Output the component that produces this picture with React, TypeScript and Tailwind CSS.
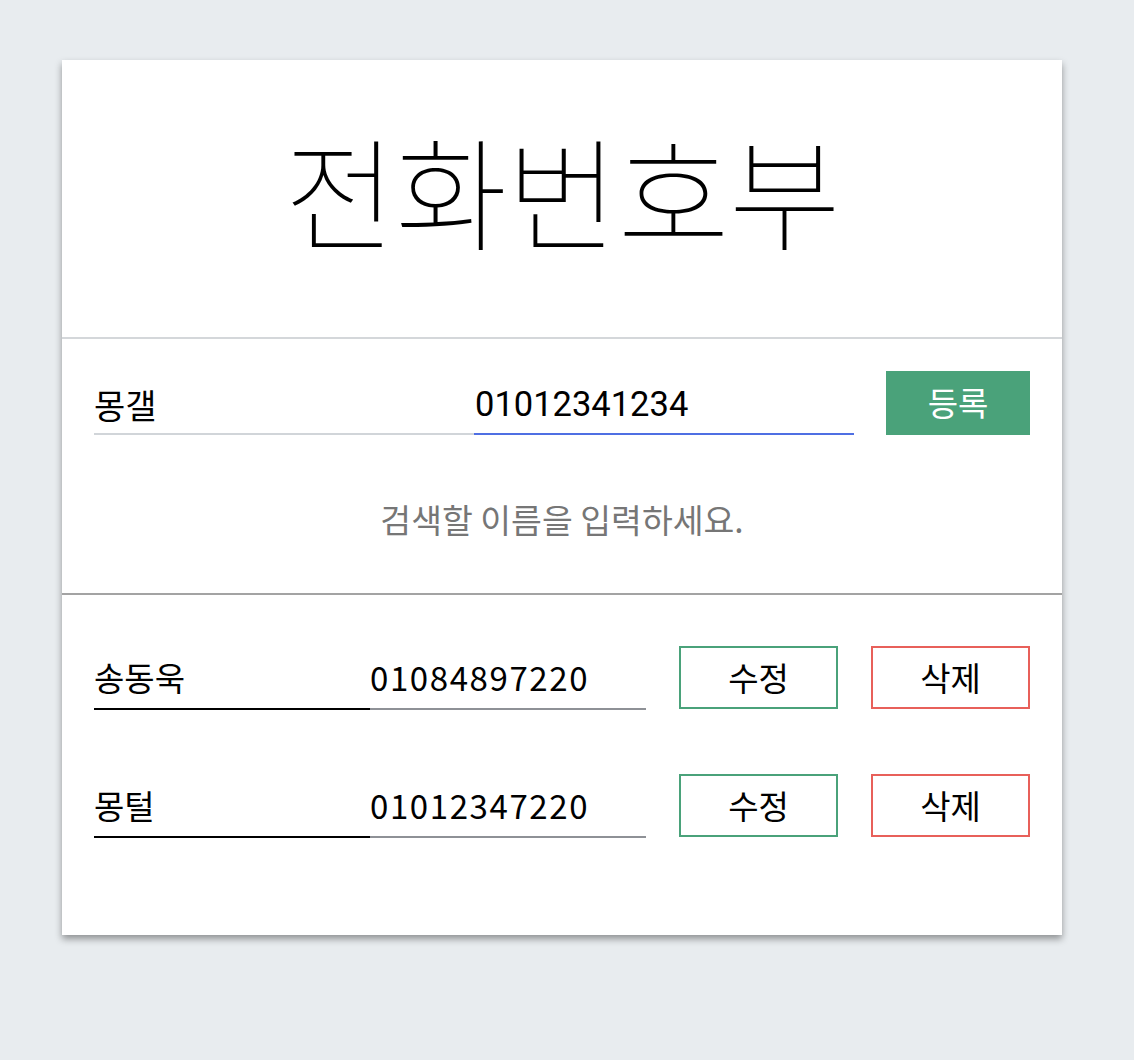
import { useState } from "react";

type Contact = { id: number; name: string; phone: string };

const initial: Contact[] = [
  { id: 1, name: "송동욱", phone: "01084897220" },
  { id: 2, name: "몽털", phone: "01012347220" },
];

const App = () => {
  const [name, setName] = useState("몽갤");
  const [phone, setPhone] = useState("01012341234");
  const [contacts] = useState<Contact[]>(initial);

  return (
    <div className="min-h-[1060px] bg-[#e8ecef] pt-[60px] pl-[62px] font-['Noto_Sans_CJK_KR',sans-serif] text-black">
      <div className="w-[1000px] bg-white shadow-[0_4px_7px_rgba(0,0,0,0.38)]">
        {/* Title */}
        <div className="flex h-[279px] items-center justify-center border-b-2 border-[#d4d7da]">
          <h1 className="pb-[22px] text-[122px] font-thin leading-none tracking-[-1px]">전화번호부</h1>
        </div>

        {/* Form */}
        <div className="border-b-2 border-[#a3a3a3] px-8 pt-8 pb-[54px]">
          <div className="flex items-start gap-8">
            <div className="flex">
              <input
                value={name}
                onChange={(e) => setName(e.target.value)}
                className="h-16 w-[380px] border-b-2 border-[#d1d5d9] bg-transparent pt-[4px] text-[34px] outline-none"
              />
              <input
                value={phone}
                onChange={(e) => setPhone(e.target.value)}
                className="h-16 w-[380px] border-b-2 border-[#4f6fe3] bg-transparent pl-[1px] pt-[4px] font-['Roboto','Noto_Sans_CJK_KR',sans-serif] text-[34.5px] outline-none"
              />
            </div>
            <button className="h-16 w-[144px] bg-[#4aa27a] text-[33px] text-white">등록</button>
          </div>
          <p className="mt-[64px] text-center text-[33.5px] leading-[40px] text-[#767676]">검색할 이름을 입력하세요.</p>
        </div>

        {/* List */}
        <div className="flex flex-col gap-16 px-8 pt-[51px] pb-[97px]">
          {contacts.map((c) => (
            <div key={c.id} className="flex items-start">
              <div className="flex">
                <div className="flex h-16 w-[276px] items-center border-b-2 border-black pt-[2px] text-[33px]">
                  {c.name}
                </div>
                <div className="flex h-16 w-[276px] items-center border-b-2 border-[#8e9196] pt-[2px] text-[33px] tracking-[1.6px]">
                  {c.phone}
                </div>
              </div>
              <button className="ml-[33px] h-[63px] w-[159px] border-2 border-[#4aa27a] text-[33px]">수정</button>
              <button className="ml-[33px] h-[63px] w-[159px] border-2 border-[#e8605a] text-[33px]">삭제</button>
            </div>
          ))}
        </div>
      </div>
    </div>
  );
};

export default App;
